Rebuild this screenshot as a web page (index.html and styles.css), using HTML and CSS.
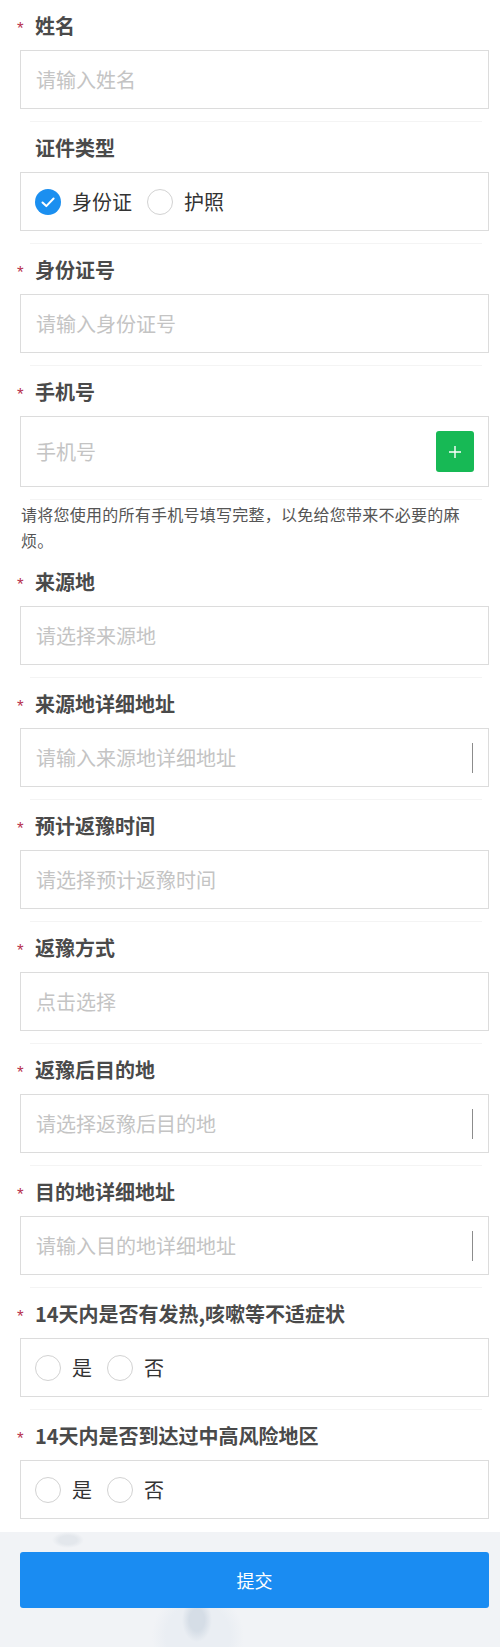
FILE: index.html
```html
<!DOCTYPE html>
<html lang="zh-CN">
<head>
    <meta charset="UTF-8">
    <meta name="viewport" content="width=device-width, initial-scale=1.0">
    <title>返豫人员信息登记</title>
    <link rel="stylesheet" href="styles.css">
</head>
<body>
    <form class="form">
        <div class="item">
            <div class="label"><span class="star">*</span>姓名</div>
            <div class="box"><span class="ph">请输入姓名</span></div>
        </div>

        <div class="item">
            <div class="label"><span class="star"></span>证件类型</div>
            <div class="box choices">
                <label class="option">
                    <span class="radio checked">
                        <svg viewBox="0 0 26 26" width="26" height="26"><path d="M7.5 13.5l3.8 3.6 7.3-7.6" fill="none" stroke="#fff" stroke-width="2" stroke-linecap="round" stroke-linejoin="round"/></svg>
                    </span>身份证
                </label>
                <label class="option"><span class="radio"></span>护照</label>
            </div>
        </div>

        <div class="item">
            <div class="label"><span class="star">*</span>身份证号</div>
            <div class="box"><span class="ph">请输入身份证号</span></div>
        </div>

        <div class="item">
            <div class="label"><span class="star">*</span>手机号</div>
            <div class="box phone">
                <span class="ph">手机号</span>
                <button type="button" class="add">
                    <svg viewBox="0 0 14 14" width="14" height="14"><path d="M7 1v12M1 7h12" stroke="#fff" stroke-width="1.4"/></svg>
                </button>
            </div>
        </div>
        <p class="hint">请将您使用的所有手机号填写完整，以免给您带来不必要的麻烦。</p>

        <div class="item">
            <div class="label"><span class="star">*</span>来源地</div>
            <div class="box"><span class="ph">请选择来源地</span></div>
        </div>

        <div class="item">
            <div class="label"><span class="star">*</span>来源地详细地址</div>
            <div class="box"><span class="ph">请输入来源地详细地址</span><span class="caret"></span></div>
        </div>

        <div class="item">
            <div class="label"><span class="star">*</span>预计返豫时间</div>
            <div class="box"><span class="ph">请选择预计返豫时间</span></div>
        </div>

        <div class="item">
            <div class="label"><span class="star">*</span>返豫方式</div>
            <div class="box"><span class="ph">点击选择</span></div>
        </div>

        <div class="item">
            <div class="label"><span class="star">*</span>返豫后目的地</div>
            <div class="box"><span class="ph">请选择返豫后目的地</span><span class="caret"></span></div>
        </div>

        <div class="item">
            <div class="label"><span class="star">*</span>目的地详细地址</div>
            <div class="box"><span class="ph">请输入目的地详细地址</span><span class="caret"></span></div>
        </div>

        <div class="item">
            <div class="label"><span class="star">*</span>14天内是否有发热,咳嗽等不适症状</div>
            <div class="box choices">
                <label class="option"><span class="radio"></span>是</label>
                <label class="option"><span class="radio"></span>否</label>
            </div>
        </div>

        <div class="item last">
            <div class="label"><span class="star">*</span>14天内是否到达过中高风险地区</div>
            <div class="box choices">
                <label class="option"><span class="radio"></span>是</label>
                <label class="option"><span class="radio"></span>否</label>
            </div>
        </div>

        <div class="footer">
            <button type="button" class="submit">提交</button>
        </div>
    </form>
</body>
</html>
```

FILE: styles.css
```css
/* 基础 */
body {
    margin: 0;
    background: #fff;
    font-family: "Noto Sans CJK SC", "Noto Sans", sans-serif;
    color: #333;
}

.form {
    margin: 0;
}

/* 表单项 */
.item {
    padding: 14px 11px 0 17px;
}

.item::after {
    content: "";
    display: block;
    height: 1px;
    background: #f4f4f4;
    margin: 12px 7px 0 13px;
}

.item.last::after {
    background: transparent;
}

.label {
    display: flex;
    align-items: center;
    height: 24px;
    line-height: 24px;
    font-size: 20px;
    font-weight: bold;
    color: #4a4a4a;
    margin-bottom: 12px;
}

.star {
    width: 18px;
    flex: none;
    font-family: "Liberation Sans", sans-serif;
    font-size: 17px;
    font-weight: normal;
    color: #b8324f;
    position: relative;
    top: 3px;
}

.box {
    margin-left: 3px;
    height: 59px;
    box-sizing: border-box;
    border: 1px solid #dcdcdc;
    display: flex;
    align-items: center;
    padding: 0 15px;
    font-size: 20px;
    line-height: 24px;
}

.ph {
    color: #c4c4c4;
}

.caret {
    margin-left: auto;
    width: 1px;
    height: 30px;
    background: #8c8c8c;
}

/* 手机号 */
.box.phone {
    height: 71px;
    padding-right: 14px;
}

.add {
    margin-left: auto;
    width: 38px;
    height: 41px;
    border: none;
    border-radius: 3px;
    background: #17b955;
    display: flex;
    align-items: center;
    justify-content: center;
    padding: 0;
}

.hint {
    margin: 0;
    padding: 1px 32px 3px 21px;
    font-size: 16px;
    letter-spacing: 0.25px;
    line-height: 26px;
    color: #555;
}

/* 单选 */
.box.choices {
    padding-left: 14px;
    color: #333;
}

.option {
    display: flex;
    align-items: center;
    margin-right: 15px;
}

.radio {
    width: 26px;
    height: 26px;
    box-sizing: border-box;
    border: 1px solid #d2d2d2;
    border-radius: 50%;
    margin-right: 11px;
    display: flex;
}

.radio.checked {
    border: none;
    background: #1b8ff0;
}

/* 底部 */
.footer {
    padding: 20px 11px 39px 20px;
    background-color: #f1f3f6;
    background-image:
        radial-gradient(ellipse 16px 8px at 68px 8px, #e3e7ec 55%, transparent 100%),
        radial-gradient(ellipse 15px 22px at 197px 88px, #d5dde6 50%, transparent 100%),
        radial-gradient(circle 46px at 198px 104px, #eaeef3 70%, transparent 100%);
}

.submit {
    display: block;
    width: 100%;
    height: 56px;
    border: none;
    border-radius: 3px;
    background: #1a8cf2;
    color: #fff;
    font-family: inherit;
    font-size: 18px;
    cursor: pointer;
}
```
